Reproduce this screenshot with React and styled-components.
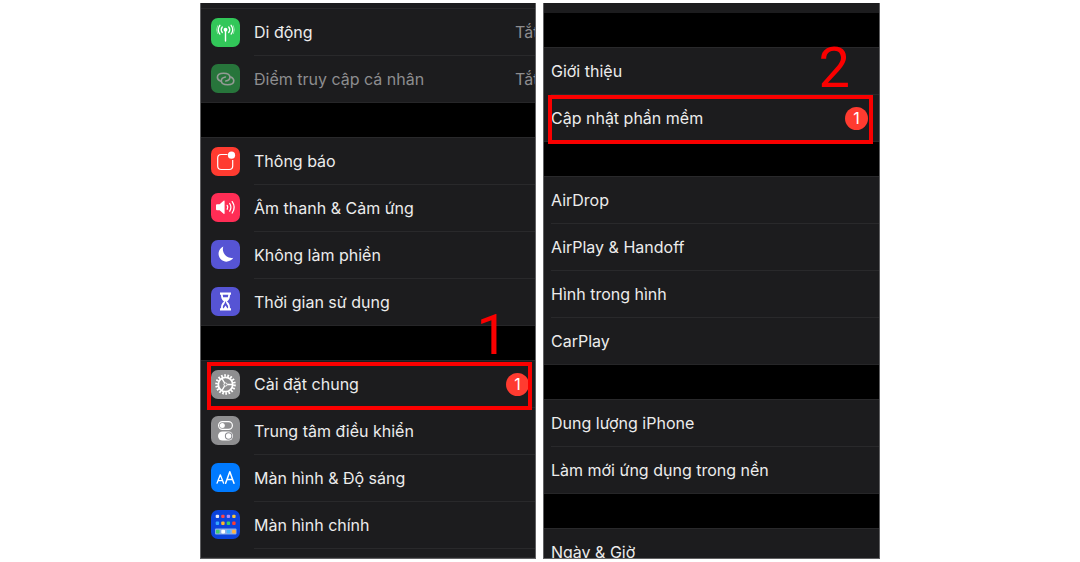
import React from "react";
import styled, { createGlobalStyle, css } from "styled-components";

const GlobalStyle = createGlobalStyle`
  * { box-sizing: border-box; }
  body {
    margin: 0;
    background: #fff;
    font-family: Inter, "Noto Sans", sans-serif;
  }
`;

const Page = styled.main`
  display: flex;
  justify-content: center;
  align-items: stretch;
  gap: 7px;
  padding: 3px 0;
`;

const Panel = styled.nav`
  flex: 0 1 ${(p) => p.$basis}px;
  min-width: 0;
  display: flex;
  flex-direction: column;
  gap: 34px;
  background: #000;
  border: solid #606062;
  border-width: 0 1px 1px;
`;

const Group = styled.ul`
  list-style: none;
  margin: 0;
  padding: 0;
  background: #1c1c1e;
  border-bottom: 1px solid #262628;
  ${(p) =>
    p.$visible &&
    css`
      height: ${p.$visible}px;
      overflow: hidden;
      border-bottom: 0;
    `}
`;

const Row = styled.li`
  position: relative;
  border-top: ${(p) => (p.$first ? "1px solid #29292b" : "0")};
`;

const RowLink = styled.a`
  display: flex;
  gap: 14px;
  height: ${(p) => (p.$first ? 46 : 47)}px;
  padding-left: ${(p) => (p.$plain ? 7 : 10)}px;
  color: ${(p) => (p.$dim ? "#8d8d8f" : "#ececec")};
  text-decoration: none;
`;

const IconTile = styled.span`
  flex: none;
  align-self: center;
  width: 29px;
  height: 29px;
  border-radius: 7px;
  overflow: hidden;
  background: ${(p) => p.$color};
  svg { display: block; }
`;

const RowBody = styled.span`
  flex: 1;
  min-width: 0;
  display: flex;
  align-items: center;
  justify-content: space-between;
  border-top: ${(p) => (p.$first ? "0" : "1px solid #29292b")};
`;

const Label = styled.span`
  font-size: 16px;
  line-height: 24px;
  white-space: nowrap;
`;

const Value = styled.span`
  flex: 0 0 20px;
  overflow: hidden;
  color: #8d8d8f;
  font-size: 16px;
  line-height: 24px;
  white-space: nowrap;
`;

const Badge = styled.span`
  flex: none;
  width: 23px;
  height: 23px;
  margin-right: ${(p) => p.$inset}px;
  border-radius: 50%;
  background: #ff3b30;
  color: #fff;
  font-size: 16px;
  line-height: 23px;
  text-align: center;
`;

const Highlight = styled.span`
  position: absolute;
  inset: 1px ${(p) => p.$right}px -3px ${(p) => p.$left}px;
  border: 4px solid #fb0000;
  pointer-events: none;
  z-index: 1;
`;

const StepNumber = styled.span`
  position: absolute;
  right: ${(p) => p.$right}px;
  bottom: calc(100% - 2px);
  color: #fb0000;
  font-family: Roboto, sans-serif;
  font-size: 56px;
  line-height: 56px;
  z-index: 1;
`;

const Drawing = ({ children }) => (
  <svg width="29" height="29" viewBox="0 0 29 29" fill="none" aria-hidden="true">
    {children}
  </svg>
);

const CellularIcon = () => (
  <Drawing>
    <g stroke="#fff" strokeWidth="1.3" strokeLinecap="round">
      <path d="M14.5 12v11" strokeWidth="1.4" />
      <path d="M11.3 8.9a4.6 4.6 0 0 0 0 5.6M17.7 8.9a4.6 4.6 0 0 1 0 5.6" />
      <path d="M8.9 7.3a7.4 7.4 0 0 0 0 8.8M20.1 7.3a7.4 7.4 0 0 1 0 8.8" />
      <path d="M6.6 7.7a8.4 8.4 0 0 0 0 8M22.4 7.7a8.4 8.4 0 0 1 0 8" strokeWidth=".5" />
    </g>
    <circle cx="14.5" cy="11.7" r="1.9" fill="#fff" />
  </Drawing>
);

const hotspotLink = "M9.4 17.1C7.500 16.300 6.400 15 6.400 13.200c0-2.600 2.700-4 6.200-4s6.300 1.500 6.300 4c0 2-1.500 3.300-4.100 3.800";

const HotspotIcon = () => (
  <Drawing>
    <g stroke="#949b96" strokeWidth="1.600" strokeLinecap="round">
      <path d={hotspotLink} />
      <path d={hotspotLink} transform="rotate(180 14.600 15)" />
    </g>
  </Drawing>
);

const NotificationIcon = () => (
  <Drawing>
    <path
      d="M16.500 7.500h-6.300q-3.500 0-3.500 3.500v8q0 3.500 3.500 3.500h8q3.500 0 3.500-3.500v-6"
      stroke="#fff"
      strokeWidth="1.200"
    />
    <circle cx="20.500" cy="8.200" r="3.600" fill="#fff" />
  </Drawing>
);

const SoundIcon = () => (
  <Drawing>
    <path d="M5 12.200q0-1 1-1h2.600l4-3.400q1-.7 1 .5v12q0 1.200-1 .5l-4-3.500H6q-1 0-1-1Z" fill="#fff" />
    <g stroke="#fff" strokeWidth="1.300" strokeLinecap="round">
      <path d="M16.200 12.400q1.200 1.900 0 3.800" />
      <path d="M18.700 10.500q2.500 3.800 0 7.600" />
      <path d="M21.200 8.600q4 5.700 0 11.400" />
    </g>
  </Drawing>
);

const MoonIcon = () => (
  <Drawing>
    <path d="M12.300 6.500a7.900 7.900 0 1 0 10 11.200A8.700 8.700 0 0 1 12.300 6.500Z" fill="#fff" />
  </Drawing>
);

const HourglassIcon = () => (
  <Drawing>
    <path
      d="M9 5.500h11v2.300h-1c0 3.500-.8 5-3 6.700 2.200 1.700 3 3.200 3 6.700h1v2.300H9v-2.300h1c0-3.500.8-5 3-6.700-2.200-1.700-3-3.200-3-6.700H9Z"
      fill="#fff"
    />
    <path d="M11.700 7.800h5.600l-.4 2.400h-4.800ZM14.500 14l1 2.600 1.600 2.400v2.200h-.8l-1.800-2.600-1.800 2.600h-.8V19l1.600-2.400Z" fill="#5654d4" />
  </Drawing>
);

const GearIcon = () => (
  <Drawing>
    <circle cx="14.500" cy="14.500" r="9" stroke="#fff" strokeWidth="2.600" strokeDasharray="1.700 1.442" />
    <circle cx="14.500" cy="14.500" r="7.200" stroke="#fff" strokeWidth="1.800" />
    <circle cx="14.500" cy="14.500" r="1.600" stroke="#fff" strokeWidth="1" />
    <path d="M16.300 14.500h5M13.600 13l-2.600-4.400M13.600 16l-2.600 4.400" stroke="#fff" strokeWidth="1.400" />
  </Drawing>
);

const ControlIcon = () => (
  <Drawing>
    <rect x="7.600" y="5.600" width="13.800" height="7.800" rx="3.900" stroke="#fff" strokeWidth="1.200" />
    <circle cx="11.300" cy="9.500" r="2.500" fill="#fff" />
    <rect x="7" y="15.500" width="15" height="9" rx="4.500" fill="#fff" />
    <circle cx="17.600" cy="20" r="3.200" stroke="#8e8e93" strokeWidth="1.100" />
  </Drawing>
);

const TextSizeIcon = () => (
  <Drawing>
    <g stroke="#fff" strokeLinejoin="round" strokeLinecap="round">
      <path d="m6 20.200 3.300-8.400 3.300 8.400M7.100 17.600h4.400" strokeWidth="1.300" />
      <path d="m14.600 20.200 4.200-11.400L23 20.200M16 16.600h5.600" strokeWidth="1.500" />
    </g>
  </Drawing>
);

const homeDots = [
  ["#e8e8f5", "#ff4545", "#a78bfa", "#f5c63c"],
  ["#35a8ff", "#ffb52b", "#38cf6c", "#ff3b30"],
];
const dockColors = ["#43cf70", "#ffffff", "#48b5ff", "#ffb340"];

const HomeScreenIcon = () => (
  <Drawing>
    {homeDots.map((line, y) =>
      line.map((color, x) => (
        <rect key={`${x}-${y}`} x={4.7 + x * 5.5} y={4.7 + y * 6.8} width="3.400" height="3.400" rx="1" fill={color} />
      ))
    )}
    <rect x="4" y="18.500" width="21.500" height="6" rx="1" fill="#8eafe9" />
    {dockColors.map((color, x) => (
      <rect key={color} x={4.9 + x * 5.4} y="19.700" width="3.700" height="3.700" rx="1" fill={color} />
    ))}
  </Drawing>
);

const mainGroups = [
  {
    rows: [
      { label: "Di động", color: "#32c759", icon: CellularIcon, value: "Tắt" },
      { label: "Điểm truy cập cá nhân", color: "#27753b", icon: HotspotIcon, value: "Tắt", dim: true },
    ],
  },
  {
    rows: [
      { label: "Thông báo", color: "#ff3b30", icon: NotificationIcon },
      { label: "Âm thanh & Cảm ứng", color: "#ff2d55", icon: SoundIcon },
      { label: "Không làm phiền", color: "#5654d4", icon: MoonIcon },
      { label: "Thời gian sử dụng", color: "#5654d4", icon: HourglassIcon },
    ],
  },
  {
    rows: [
      {
        label: "Cài đặt chung",
        color: "#8e8e90",
        icon: GearIcon,
        badge: { count: 1, inset: 6 },
        mark: { step: 1, right: 27, boxLeft: 6, boxRight: 3 },
      },
      { label: "Trung tâm điều khiển", color: "#8e8e90", icon: ControlIcon },
      { label: "Màn hình & Độ sáng", color: "#007aff", icon: TextSizeIcon },
      { label: "Màn hình chính", color: "#0b43dc", icon: HomeScreenIcon },
    ],
  },
];

const generalGroups = [
  { visible: 10, rows: [] },
  {
    rows: [
      { label: "Giới thiệu" },
      {
        label: "Cập nhật phần mềm",
        badge: { count: 1, inset: 11 },
        mark: { step: 2, right: 29, boxLeft: 4, boxRight: 6 },
      },
    ],
  },
  {
    rows: [
      { label: "AirDrop" },
      { label: "AirPlay & Handoff" },
      { label: "Hình trong hình" },
      { label: "CarPlay" },
    ],
  },
  { rows: [{ label: "Dung lượng iPhone" }, { label: "Làm mới ứng dụng trong nền" }] },
  { visible: 30, rows: [{ label: "Ngày & Giờ" }] },
];

// The top strip of the first list is joined to the group that follows it.
const JoinedStrip = styled.div`
  height: 5px;
  background: #1c1c1e;
  margin-bottom: -34px;
`;

const EndStrip = styled.li`
  height: 9px;
  padding-left: 53px;
  &::before {
    content: "";
    display: block;
    border-top: 1px solid #29292b;
  }
`;

function SettingsRow({ row, first }) {
  const Icon = row.icon;
  return (
    <Row $first={first}>
      <RowLink href="#" $first={first} $plain={!Icon} $dim={row.dim}>
        {Icon && (
          <IconTile $color={row.color}>
            <Icon />
          </IconTile>
        )}
        <RowBody $first={first}>
          <Label>{row.label}</Label>
          {row.value && <Value>{row.value}</Value>}
          {row.badge && <Badge $inset={row.badge.inset}>{row.badge.count}</Badge>}
        </RowBody>
      </RowLink>
      {row.mark && (
        <>
          <Highlight $left={row.mark.boxLeft} $right={row.mark.boxRight} />
          <StepNumber $right={row.mark.right}>{row.mark.step}</StepNumber>
        </>
      )}
    </Row>
  );
}

function SettingsGroup({ group, children }) {
  return (
    <Group $visible={group.visible}>
      {group.rows.map((row, i) => (
        <SettingsRow key={row.label} row={row} first={i === 0} />
      ))}
      {children}
    </Group>
  );
}

export default function App() {
  return (
    <>
      <GlobalStyle />
      <Page>
        <Panel $basis={336} aria-label="Cài đặt">
          <JoinedStrip />
          {mainGroups.map((group, i) => (
            <SettingsGroup key={i} group={group}>
              {i === mainGroups.length - 1 && <EndStrip />}
            </SettingsGroup>
          ))}
        </Panel>
        <Panel $basis={337} aria-label="Cài đặt chung">
          {generalGroups.map((group, i) => (
            <SettingsGroup key={i} group={group} />
          ))}
        </Panel>
      </Page>
    </>
  );
}
